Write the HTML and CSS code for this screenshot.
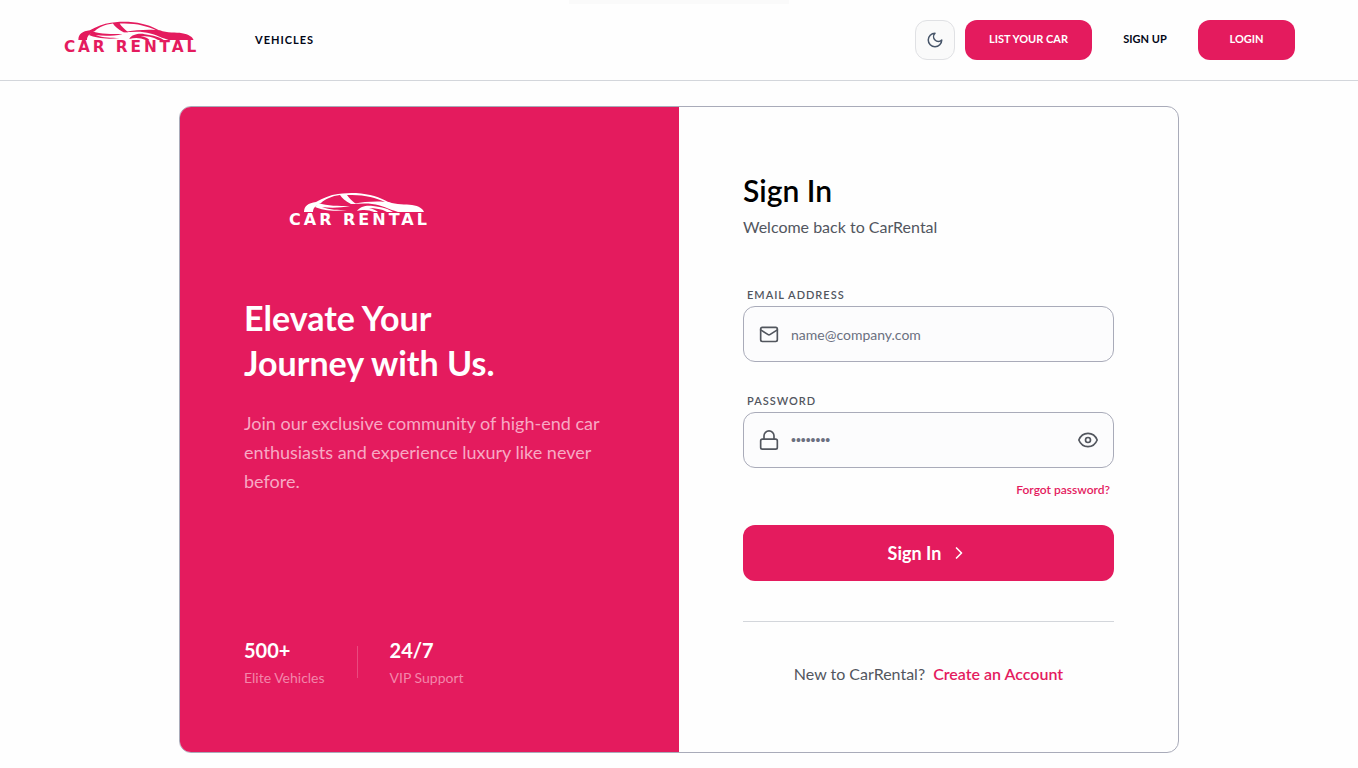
FILE: index.html
```html
<!DOCTYPE html>
<html lang="en">
<head>
    <meta charset="UTF-8">
    <meta name="viewport" content="width=device-width, initial-scale=1.0">
    <title>CarRental - Sign In</title>
    <link rel="stylesheet" href="styles.css">
</head>
<body>

    <!-- Shared logo drawing -->
    <svg class="sprite" aria-hidden="true">
        <symbol id="logo" viewBox="0 0 150 38">
            <!-- rear fender and roof -->
            <path d="M16 21C16 15 20 12 28 11C35 7 42 4 50 3C56 2 62 2 68 2C82 3 92 6 100 11L97 11C88 7 78 4 64 4L59 4C61 7 64 10 68 13L63 13C57 10 54 7 52 4C44 5 37 8 33 12C27 14 25 18 25 21Z"/>
            <!-- side line -->
            <path d="M30 12C40 15 50 15 62 15C52 17 42 17 34 16C42 19 50 19 59 19C46 21 34 19 27 16Z"/>
            <!-- hood -->
            <path d="M63 13C78 10 92 10 101 11C108 14 118 13 124 14C131 15 135 18 136 21L110 21C100 18 94 14 84 13C77 12 70 13 63 13Z"/>
            <!-- front wheel arch -->
            <path d="M69 20C72 15 79 14 85 15C94 16 101 18 105 21L99 21C94 18 87 17 81 17C85 18 88 19 90 21L86 21C81 19 76 18 69 20Z"/>
            <text x="1" y="34">CAR RENTAL</text>
        </symbol>
    </svg>

    <header class="header">
        <div class="nav">
            <a href="#" class="logo" aria-label="Car Rental"><svg><use href="#logo"/></svg></a>
            <a href="#" class="nav-link">VEHICLES</a>
            <div class="nav-actions">
                <button type="button" class="theme-btn" aria-label="Dark mode">
                    <svg class="icon icon-small" viewBox="0 0 24 24"><path d="M12 3a6 6 0 0 0 9 9 9 9 0 1 1-9-9Z"/></svg>
                </button>
                <button type="button" class="btn btn-list">LIST YOUR CAR</button>
                <a href="#" class="signup-link">SIGN UP</a>
                <button type="button" class="btn btn-login">LOGIN</button>
            </div>
        </div>
    </header>

    <main class="card">
        <section class="promo">
            <div class="promo-logo"><svg><use href="#logo"/></svg></div>
            <h2>Elevate Your<br>Journey with Us.</h2>
            <p class="promo-text">Join our exclusive community of high-end car enthusiasts and experience luxury like never before.</p>
            <div class="stats">
                <div class="stat">
                    <strong>500+</strong>
                    <span>Elite Vehicles</span>
                </div>
                <div class="divider"></div>
                <div class="stat">
                    <strong>24/7</strong>
                    <span>VIP Support</span>
                </div>
            </div>
        </section>

        <section class="signin">
            <h1>Sign In</h1>
            <p class="subtitle">Welcome back to CarRental</p>

            <form>
                <label for="email">EMAIL ADDRESS</label>
                <div class="field">
                    <svg class="icon" viewBox="0 0 24 24"><rect x="2" y="4" width="20" height="17" rx="2"/><path d="m22 7-8.97 5.7a1.94 1.94 0 0 1-2.06 0L2 7"/></svg>
                    <input type="email" id="email" placeholder="name@company.com">
                </div>

                <label for="password">PASSWORD</label>
                <div class="field">
                    <svg class="icon" viewBox="0 0 24 24"><rect x="2" y="11" width="20" height="12" rx="2"/><path d="M6 11V7a6 6 0 0 1 12 0v4"/></svg>
                    <input type="password" id="password" placeholder="••••••••">
                    <button type="button" class="eye-btn" aria-label="Show password">
                        <svg class="icon" viewBox="0 0 24 24"><path d="M1 12c2-5 6-8 11-8s9 3 11 8c-2 5-6 8-11 8s-9-3-11-8Z"/><circle cx="12" cy="12" r="3"/></svg>
                    </button>
                </div>

                <a href="#" class="forgot">Forgot password?</a>

                <button type="submit" class="submit-btn">
                    Sign In
                    <svg class="icon" viewBox="0 0 24 24"><path d="m9 18 6-6-6-6"/></svg>
                </button>
            </form>

            <p class="create">New to CarRental? <a href="#">Create an Account</a></p>
        </section>
    </main>

</body>
</html>
```
FILE: styles.css
```css
:root {
    --primary: #e41b5e;
    --text: #020617;
    --muted: #52565e;
    --border: #a9abb9;
    --line: #d3d6db;
    --field-bg: #fcfcfd;
}

* {
    margin: 0;
    padding: 0;
    box-sizing: border-box;
}

body {
    font-family: 'Lato', sans-serif;
    background-color: #fefefe;
    color: var(--text);
}

a {
    color: inherit;
    text-decoration: none;
}

button {
    font-family: inherit;
    border: none;
    cursor: pointer;
}

.sprite {
    position: absolute;
    width: 0;
    height: 0;
}

#logo {
    fill: currentColor;
    overflow: visible;
}

#logo text {
    font-family: 'DejaVu Sans', sans-serif;
    font-size: 16px;
    font-weight: bold;
    letter-spacing: 3px;
}

.icon {
    width: 20px;
    height: 20px;
    flex-shrink: 0;
    fill: none;
    stroke: currentColor;
    stroke-width: 2;
    stroke-linecap: round;
    stroke-linejoin: round;
}

.icon-small {
    width: 18px;
    height: 18px;
}

/* Header */
.header {
    position: relative;
    border-bottom: 1px solid var(--line);
}

/* Faint edge above the nav */
.header::before {
    content: "";
    position: absolute;
    top: 0;
    left: 50%;
    width: 220px;
    height: 4px;
    transform: translateX(-50%);
    background: #fafafa;
}

.nav {
    display: flex;
    align-items: center;
    max-width: 1280px;
    height: 80px;
    margin: 0 auto;
    padding: 0 24px;
}

.logo {
    color: var(--primary);
    margin-right: 48px;
}

.logo svg {
    display: block;
    width: 144px;
    height: 38px;
    margin-bottom: 5px;
    overflow: visible;
}

.nav-link {
    padding-bottom: 2px;
    font-size: 11px;
    font-weight: bold;
    letter-spacing: 1px;
}

.nav-actions {
    display: flex;
    align-items: center;
    margin-left: auto;
}

.theme-btn {
    display: flex;
    align-items: center;
    justify-content: center;
    width: 40px;
    height: 40px;
    margin-right: 10px;
    background: #fafafa;
    color: #475569;
    border: 1px solid #e0e1e4;
    border-radius: 12px;
}

.btn {
    height: 40px;
    padding-bottom: 3px;
    background: var(--primary);
    color: white;
    font-size: 11px;
    font-weight: bold;
    border-radius: 12px;
}

.btn-list {
    width: 127px;
}

.btn-login {
    width: 97px;
}

.signup-link {
    width: 106px;
    padding-bottom: 3px;
    font-size: 11px;
    font-weight: bold;
    text-align: center;
}

/* Card */
.card {
    display: grid;
    grid-template-columns: 1fr 1fr;
    max-width: 1000px;
    margin: 25px auto 15px;
    border: 1px solid var(--border);
    border-radius: 12px;
    overflow: hidden;
}

.promo {
    display: flex;
    flex-direction: column;
    padding: 64px;
    background: var(--primary);
    color: white;
}

.promo-logo {
    padding: 20px 44px 0;
}

.promo-logo svg {
    display: block;
    width: 150px;
    height: 38px;
    overflow: visible;
}

.promo h2 {
    margin-top: 66px;
    font-size: 34px;
    font-weight: bold;
    line-height: 45px;
}

.promo-text {
    margin-top: 24px;
    font-size: 18px;
    line-height: 29px;
    color: #f8a9c4;
}

.stats {
    display: flex;
    align-items: center;
    gap: 32px;
    margin-top: auto;
}

.stat strong {
    display: block;
    font-size: 20px;
    font-weight: bold;
    line-height: 28px;
}

.stat span {
    display: block;
    margin-top: 4px;
    font-size: 14px;
    line-height: 20px;
    color: #f386aa;
}

.divider {
    width: 1px;
    height: 32px;
    background: #ea4a7f;
}

/* Sign in form */
.signin {
    padding: 64px;
}

.signin h1 {
    font-size: 30px;
    font-weight: 600;
    line-height: 38px;
    color: black;
}

.subtitle {
    margin: 6px 0 48px;
    font-size: 16px;
    line-height: 24px;
    color: var(--muted);
}

.signin label {
    display: block;
    margin: 0 4px 3px;
    font-size: 11px;
    font-weight: 600;
    line-height: 16px;
    letter-spacing: 1px;
    color: var(--muted);
}

.field {
    display: flex;
    align-items: center;
    gap: 12px;
    height: 56px;
    margin-bottom: 31px;
    padding: 0 15px;
    background: var(--field-bg);
    color: var(--muted);
    border: 1px solid var(--border);
    border-radius: 12px;
}

.field input {
    flex: 1;
    min-width: 0;
    height: 100%;
    font-family: inherit;
    font-size: 14px;
    background: none;
    border: none;
    outline: none;
}

.field input::placeholder {
    color: #6b7080;
}

#password {
    font-family: 'Liberation Sans', sans-serif;
}

.eye-btn {
    display: flex;
    background: none;
    color: inherit;
}

.forgot {
    display: block;
    width: max-content;
    margin: -18px 4px 26px auto;
    font-size: 12px;
    font-weight: 600;
    line-height: 18px;
    color: var(--primary);
}

.submit-btn {
    display: flex;
    align-items: center;
    justify-content: center;
    gap: 8px;
    width: 100%;
    height: 56px;
    background: var(--primary);
    color: white;
    font-size: 18px;
    font-weight: bold;
    border-radius: 12px;
}

.create {
    margin-top: 40px;
    padding: 40px 0 2px;
    border-top: 1px solid var(--line);
    font-size: 16px;
    line-height: 24px;
    text-align: center;
    color: var(--muted);
}

.create a {
    margin-left: 4px;
    font-weight: 600;
    color: var(--primary);
}

@media (max-width: 800px) {
    .card {
        grid-template-columns: 1fr;
    }
}
```
